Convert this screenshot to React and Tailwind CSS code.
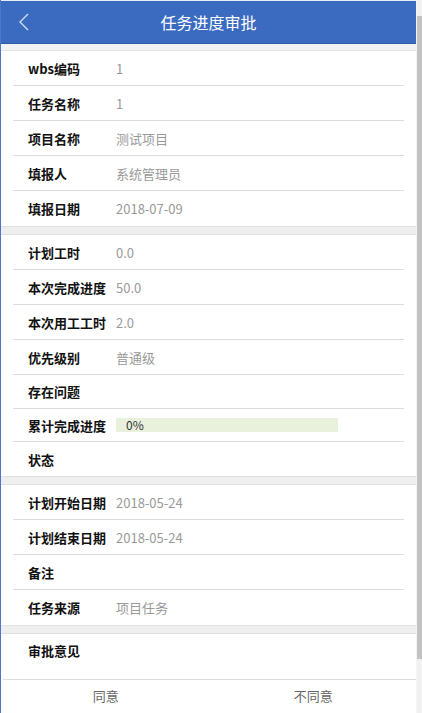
import React from "react";

const font = { fontFamily: '"Noto Sans CJK SC", "Noto Sans", sans-serif' };

function Row({ label, value, last, h = "h-[35px]", children }) {
  return (
    <div className={`mx-[12px] pl-[15px] ${h} flex items-center ${last ? "" : "border-b border-[#dcdcdc]"}`}>
      <div className="w-[88px] shrink-0 text-[13px] font-bold text-[#111] whitespace-nowrap leading-none">{label}</div>
      {children ? children : <div className="text-[13px] text-[#999] leading-none">{value}</div>}
    </div>
  );
}

function Band() {
  return <div className="h-[9px] bg-[#efefef] border-y border-[#e0e0e0]" />;
}

export default function App() {
  return (
    <div className="w-[422px] h-[713px] flex bg-white overflow-hidden" style={font}>
      <div className="w-[1px] bg-[#4a78c6]" />
      <div className="w-[415px] flex flex-col">
        <div className="h-[1px] bg-[#e8eef8]" />
        <div className="h-[43px] bg-[#3a6bc1] border-b border-[#2f5aa6] flex items-center relative">
          <svg className="absolute left-[17px] top-[12px]" width="12" height="18" viewBox="0 0 12 18" fill="none">
            <path d="M10 1 L2 9 L10 17" stroke="#cfdcf2" strokeWidth="1.4" />
          </svg>
          <div className="flex-1 text-center text-white text-[16px] leading-none">任务进度审批</div>
        </div>
        <div className="h-[7px] bg-[#f2f2f2] border-b border-[#e3e3e3]" />
        <div className="flex flex-col">
          <Row label="wbs编码" value="1" />
          <Row label="任务名称" value="1" />
          <Row label="项目名称" value="测试项目" />
          <Row label="填报人" value="系统管理员" />
          <Row label="填报日期" value="2018-07-09" last />
        </div>
        <Band />
        <div className="flex flex-col">
          <Row label="计划工时" value="0.0" />
          <Row label="本次完成进度" value="50.0" />
          <Row label="本次用工工时" value="2.0" />
          <Row label="优先级别" value="普通级" />
          <Row label="存在问题" value="" h="h-[34px]" />
          <Row label="累计完成进度" h="h-[33px]">
            <div className="w-[222px] h-[14px] bg-[#e9f1dd] flex items-center pl-[10px] text-[12px] text-[#333] leading-none">0%</div>
          </Row>
          <Row label="状态" value="" last h="h-[34px]" />
        </div>
        <Band />
        <div className="flex flex-col">
          <Row label="计划开始日期" value="2018-05-24" />
          <Row label="计划结束日期" value="2018-05-24" />
          <Row label="备注" value="" />
          <Row label="任务来源" value="项目任务" last />
        </div>
        <Band />
        <div className="h-[46px] flex items-start pt-[10px] border-b border-[#dcdcdc] ml-[2px]">
          <div className="pl-[25px] text-[13px] font-bold text-[#111] leading-none">审批意见</div>
        </div>
        <div className="flex-1 flex items-start pt-[9px]">
          <div className="w-[210px] text-center text-[13px] text-[#666] leading-none">同意</div>
          <div className="w-[206px] text-center text-[13px] text-[#666] leading-none">不同意</div>
        </div>
      </div>
      <div className="w-[1px] bg-[#f4f4f4]" />
      <div className="w-[5px] bg-[#f0f0f0] flex flex-col">
        <div className="h-[16px]" />
        <div className="h-[643px] bg-[#c3c3c3]" />
      </div>
    </div>
  );
}
